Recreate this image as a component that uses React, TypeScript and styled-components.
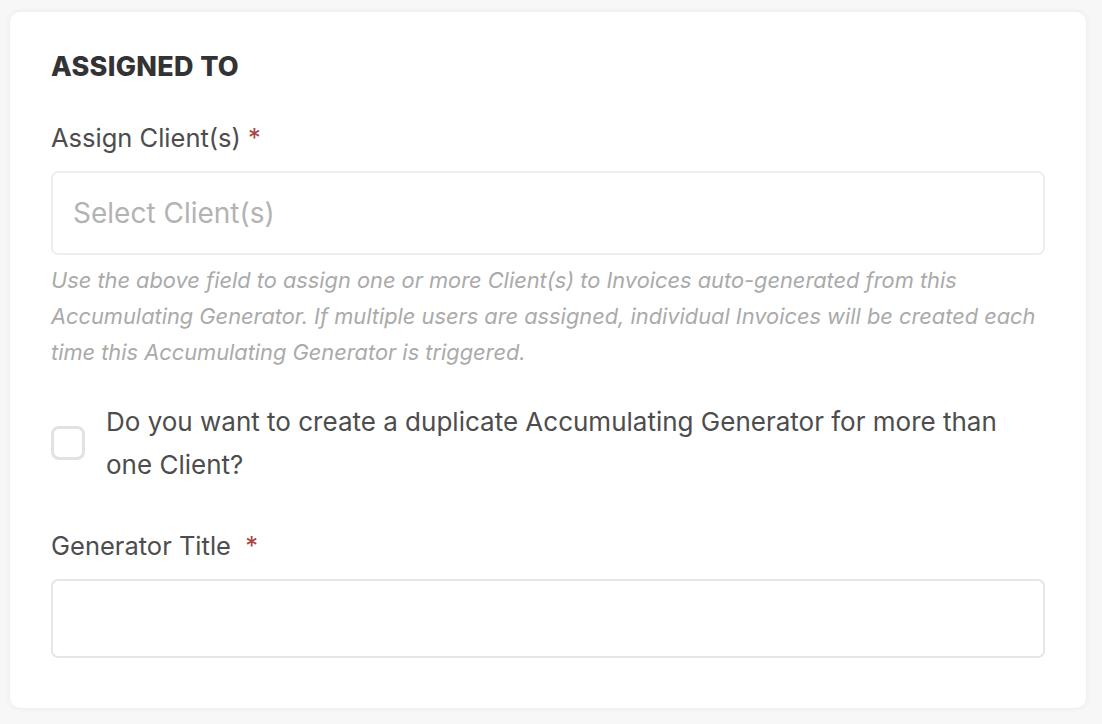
import styled, { createGlobalStyle } from "styled-components";

const GlobalStyle = createGlobalStyle`
  body {
    margin: 0;
    background: #f7f7f7;
    font-family: Inter, "Noto Sans", sans-serif;
  }
`;

const App = () => {
  return (
    <Page>
      <GlobalStyle />
      <Card>
        <Heading>ASSIGNED TO</Heading>
        <Field>
          <Label>
            Assign Client(s) <Required>*</Required>
          </Label>
          <Input placeholder="Select Client(s)" />
          <Help>
            Use the above field to assign one or more Client(s) to Invoices auto-generated from this
            Accumulating Generator. If multiple users are assigned, individual Invoices will be created each
            time this Accumulating Generator is triggered.
          </Help>
        </Field>
        <CheckRow>
          <Checkbox type="checkbox" />
          <CheckText>Do you want to create a duplicate Accumulating Generator for more than one Client?</CheckText>
        </CheckRow>
        <Field>
          <Label>
            Generator Title&nbsp; <Required>*</Required>
          </Label>
          <Input $height={79} $border="#e3e7ec" />
        </Field>
      </Card>
    </Page>
  );
};

export default App;

const Page = styled.div`
  padding: 12px 16px 17px 10px;
`;

const Card = styled.div`
  background: #fff;
  border-radius: 10px;
  box-shadow: 0 0 6px rgba(0, 0, 0, 0.07);
  padding: 38px 41px 50px 41px;
  display: flex;
  flex-direction: column;
`;

const Heading = styled.h2`
  margin: 0 0 37px;
  font-size: 27px;
  line-height: 34px;
  font-weight: 800;
  letter-spacing: 0.3px;
  color: #333;
`;

const Field = styled.div`
  display: flex;
  flex-direction: column;
`;

const Label = styled.label`
  font-size: 25.5px;
  line-height: 34px;
  color: #4d4d4d;
  margin-bottom: 16px;
`;

const Required = styled.span`
  color: #a94442;
`;

const Input = styled.input<{ $height?: number; $border?: string }>`
  box-sizing: border-box;
  width: 100%;
  height: ${(p) => p.$height ?? 84}px;
  border: 2px solid ${(p) => p.$border ?? "#eeeeee"};
  border-radius: 7px;
  padding: 0 20px;
  font-family: inherit;
  font-size: 28px;
  color: #333;
  outline: none;
  &::placeholder {
    color: #b3b3b3;
  }
`;

const Help = styled.p`
  margin: 7px 0 0;
  font-size: 21.8px;
  line-height: 36px;
  font-style: italic;
  color: #aaaaaa;
`;

const CheckRow = styled.div`
  display: flex;
  align-items: center;
  gap: 21px;
  margin: 30px 0 43px;
`;

const Checkbox = styled.input`
  appearance: none;
  flex: none;
  width: 34px;
  height: 34px;
  margin: 0;
  border: 3px solid #e2e2e2;
  border-radius: 8px;
  background: #fff;
`;

const CheckText = styled.span`
  font-size: 26px;
  line-height: 43px;
  color: #4d4d4d;
  padding-right: 20px;
`;
